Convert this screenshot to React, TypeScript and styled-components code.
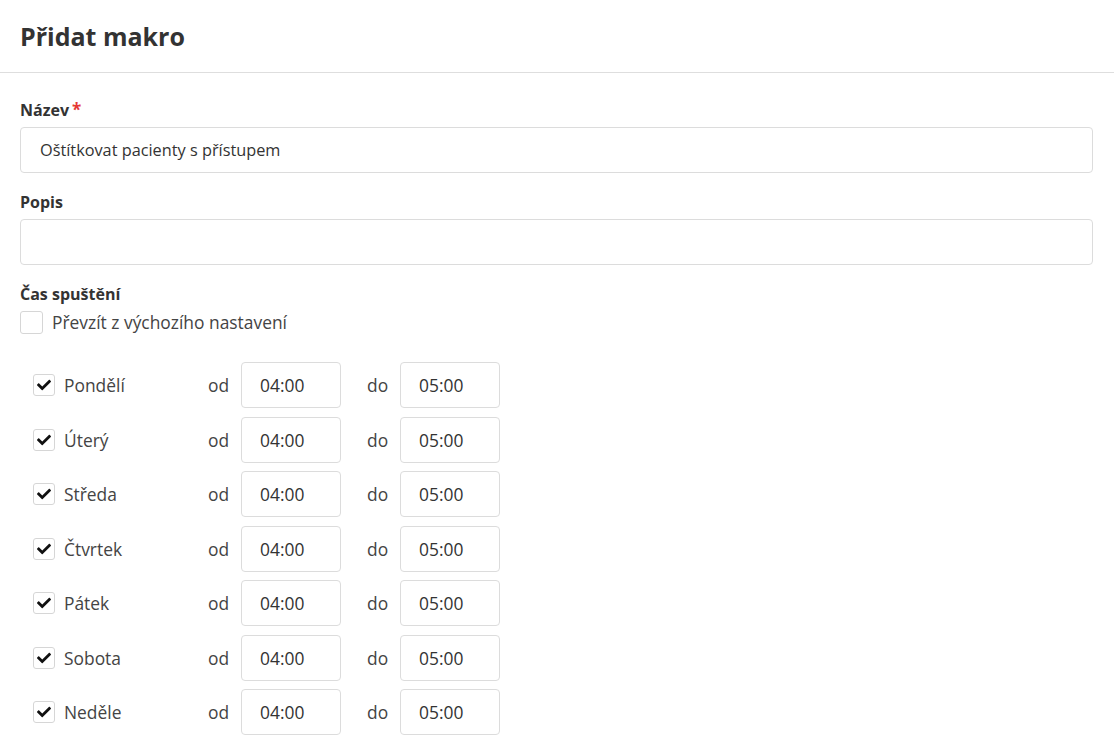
import React, { useState } from 'react'
import styled, { createGlobalStyle } from 'styled-components'
import { FaCheck } from 'react-icons/fa'

const GlobalStyle = createGlobalStyle`
  html, body {
    margin: 0;
    padding: 0;
    background: #fff;
    font-family: 'Open Sans', 'Noto Sans', sans-serif;
    color: #333;
  }
  * { box-sizing: border-box; }
`

const Header = styled.div`
  height: 73px;
  padding: 0 20px;
  display: flex;
  align-items: center;
  border-bottom: 1px solid #dedede;
`

const Title = styled.h1`
  margin: 0;
  font-size: 25px;
  font-weight: 700;
  color: #333;
`

const Form = styled.form`
  padding: 26px 21px 0 20px;
  display: flex;
  flex-direction: column;
`

const Label = styled.label`
  display: block;
  font-size: 16px;
  font-weight: 700;
  line-height: 22px;
  color: #333;
`

const Required = styled.span`
  color: #e53935;
  margin-left: 3px;
  font-size: 17px;
  vertical-align: top;
`

const TextInput = styled.input`
  display: block;
  width: 100%;
  height: 46px;
  margin: 6px 0 18px;
  padding: 0 19px;
  border: 1px solid #dcdcdc;
  border-radius: 4px;
  font-family: inherit;
  font-size: 16.3px;
  color: #333;
  outline: none;
`

const Box = styled.span<{ $size: number }>`
  display: inline-flex;
  align-items: center;
  justify-content: center;
  width: ${p => p.$size}px;
  height: ${p => p.$size}px;
  flex: 0 0 auto;
  border: 1px solid #d6d6d6;
  border-radius: 3px;
  background: #fff;
  color: #111;
  font-size: 14px;
`

const CheckRow = styled.label`
  display: flex;
  align-items: center;
  gap: 9px;
  margin-top: 5px;
  font-size: 17.4px;
  color: #444;
`

const Days = styled.div`
  display: flex;
  flex-direction: column;
  gap: 8.5px;
  margin-top: 28px;
  padding-left: 13px;
`

const DayRow = styled.div`
  display: flex;
  align-items: center;
  font-size: 17.4px;
  color: #444;
`

const DayName = styled.span`
  width: 153px;
  padding-left: 9px;
`

const Sep = styled.span<{ $gap?: number }>`
  width: 33px;
  margin-left: ${p => p.$gap ?? 0}px;
`

const TimeInput = styled.input`
  width: 100px;
  height: 46px;
  padding: 0 18px;
  border: 1px solid #dcdcdc;
  border-radius: 4px;
  font-family: inherit;
  font-size: 17.4px;
  color: #333;
  outline: none;
`

const days = ['Pondělí', 'Úterý', 'Středa', 'Čtvrtek', 'Pátek', 'Sobota', 'Neděle']

export default function App() {
  const [name, setName] = useState('Oštítkovat pacienty s přístupem')
  const [desc, setDesc] = useState('')

  return (
    <>
      <GlobalStyle />
      <Header>
        <Title>Přidat makro</Title>
      </Header>
      <Form onSubmit={e => e.preventDefault()}>
        <Label>
          Název<Required>*</Required>
        </Label>
        <TextInput value={name} onChange={e => setName(e.target.value)} />
        <Label>Popis</Label>
        <TextInput value={desc} onChange={e => setDesc(e.target.value)} />
        <Label>Čas spuštění</Label>
        <CheckRow>
          <Box $size={23} />
          Převzít z výchozího nastavení
        </CheckRow>
        <Days>
          {days.map(day => (
            <DayRow key={day}>
              <Box $size={22}>
                <FaCheck />
              </Box>
              <DayName>{day}</DayName>
              <Sep>od</Sep>
              <TimeInput defaultValue="04:00" />
              <Sep $gap={26}>do</Sep>
              <TimeInput defaultValue="05:00" />
            </DayRow>
          ))}
        </Days>
      </Form>
    </>
  )
}
